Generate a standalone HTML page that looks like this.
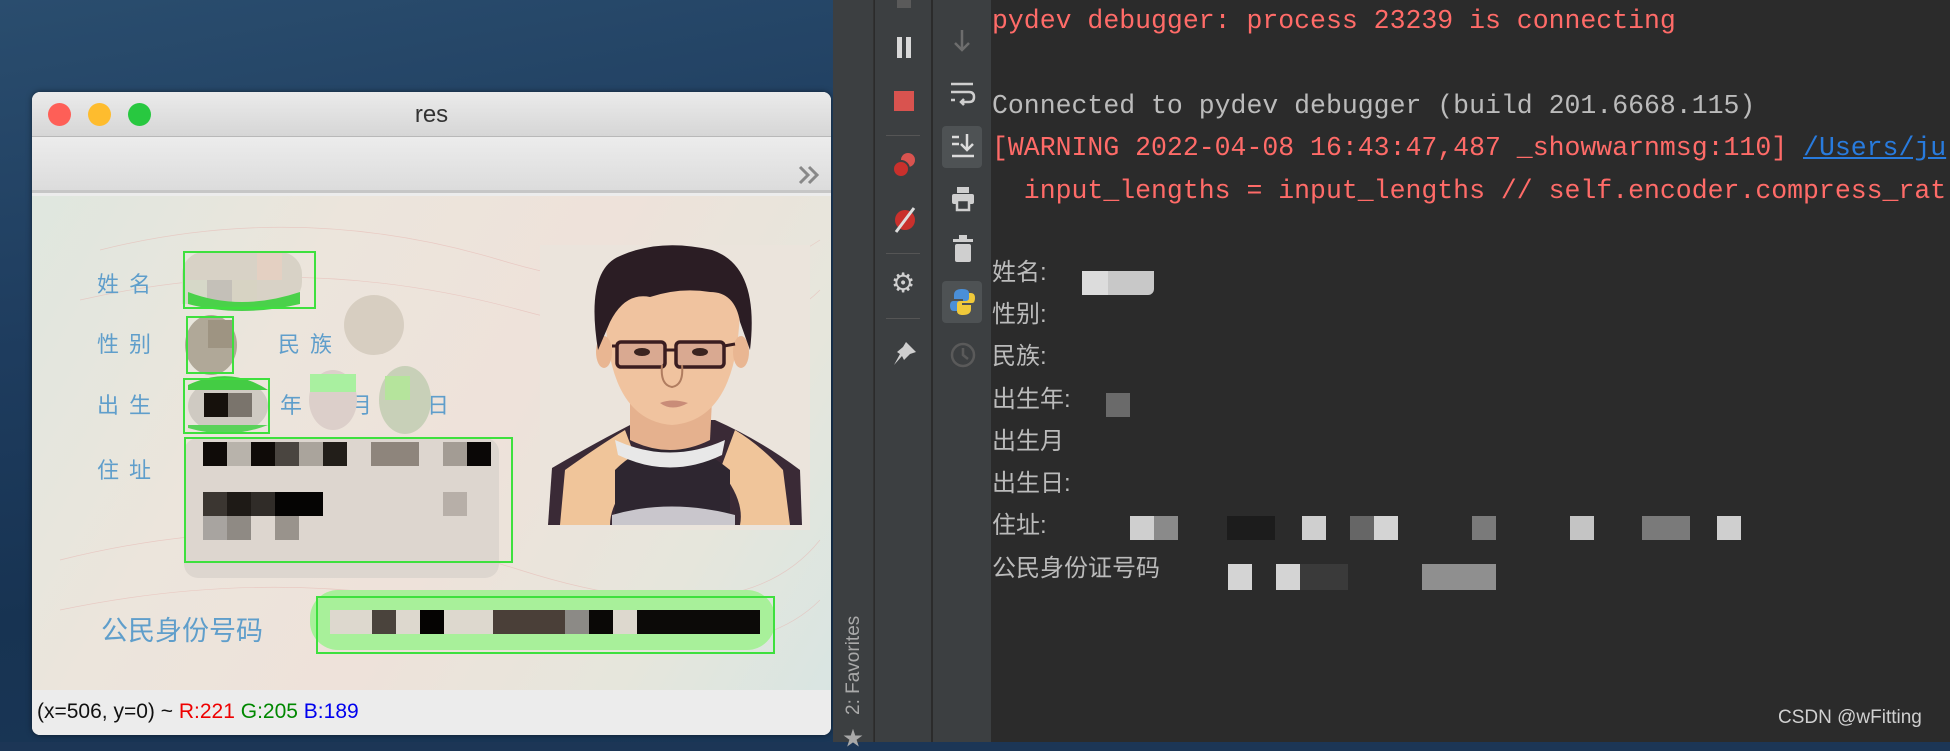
<!DOCTYPE html>
<html><head><meta charset="utf-8"><style>
*{margin:0;padding:0;box-sizing:border-box}
body{width:1950px;height:742px;overflow:hidden;position:relative;background:#1c3656;font-family:"Liberation Sans","Noto Sans CJK SC",sans-serif}
.abs{position:absolute}
.desk{left:0;top:0;width:833px;height:742px;background:linear-gradient(170deg,#2a4d6e 0%,#1e3c5e 40%,#173352 70%,#1a3757 100%)}
.win{left:32px;top:92px;width:799px;height:643px;background:#ececec;border-radius:8px;overflow:hidden;box-shadow:0 0 6px rgba(0,0,0,.5)}
.title{left:0;top:0;width:799px;height:45px;background:linear-gradient(#ebebeb,#d6d6d6);border-bottom:1px solid #b8b8b8}
.tl{width:23px;height:23px;border-radius:50%;top:11px}
.tool{left:0;top:45px;width:799px;height:56px;background:linear-gradient(#ececec,#dcdcdc);border-bottom:3px solid #c6c6c6}
.card{left:0;top:104px;width:799px;height:494px;background:linear-gradient(120deg,#dfe7df 0%,#ece5dc 30%,#eee2da 55%,#e6e6dc 80%,#d9e5e2 100%)}
.status{left:0;top:598px;width:799px;height:45px;background:#ececec;font-size:21px;padding:10px 0 0 5px;color:#111}
.ide{left:833px;top:0;width:1117px;height:742px;background:#2b2b2b}
.c1{left:833px;top:0;width:41px;height:742px;background:#3c3f41;border-right:1px solid #323232}
.c2{left:875px;top:0;width:57px;height:742px;background:#3c3f41;border-right:1px solid #2b2b2b}
.c3{left:933px;top:0;width:58px;height:742px;background:#3c3f41}
.sep{height:1px;background:#555;left:886px;width:34px}
.con{left:992px;font-family:"Liberation Mono",monospace;font-size:26.5px;white-space:pre;line-height:30px}
.r{color:#ff6b68}
.cn{left:992px;font-size:24px;color:#bbbbbb;line-height:30px;font-family:"Liberation Sans","Noto Sans CJK SC",sans-serif}
.px{height:24px}
</style></head><body>
<div class="abs desk"></div>
<div class="abs win">
 <div class="abs title">
  <div class="abs tl" style="left:16px;background:#fe5f57"></div>
  <div class="abs tl" style="left:56px;background:#febc2e"></div>
  <div class="abs tl" style="left:96px;background:#28c840"></div>
  <div class="abs" style="left:0;width:799px;top:9px;text-align:center;font-size:24px;color:#333">res</div>
 </div>
 <div class="abs tool"><svg class="abs" style="right:10px;top:28px" width="24" height="20"><path d="M3 2 L11 10 L3 18 M12 2 L20 10 L12 18" stroke="#888" stroke-width="3" fill="none"/></svg></div>
 <div class="abs card">
  <svg class="abs" style="left:0;top:0" width="799" height="494" viewBox="32 196 799 494">
   <g fill="none" stroke="#e6b8b3" stroke-width="0.7" opacity=".6">
    <path d="M100 250 Q300 200 500 260 T820 240"/><path d="M80 300 Q300 250 520 310 T820 290"/><path d="M60 560 Q300 500 520 570 T820 540"/><path d="M60 610 Q300 560 520 620 T820 600"/>
   </g>
   <rect x="540" y="245" width="270" height="285" fill="#ebe4dc"/>
   <path d="M548 525 L552 468 Q600 440 640 420 L715 420 Q760 440 800 470 L802 525 Z" fill="#3a2a36"/>
   <path d="M560 525 L565 470 Q600 445 625 430 L640 470 Q610 500 610 525 Z" fill="#f0c59a"/>
   <path d="M790 525 L783 470 Q760 445 735 430 L720 470 Q745 500 740 525 Z" fill="#f0c59a"/>
   <path d="M615 525 L615 470 Q640 445 670 445 Q700 445 730 470 L730 525 Z" fill="#2e2630"/>
   <path d="M612 515 Q670 498 735 515 L735 525 L612 525Z" fill="#c9c6cc"/>
   <path d="M615 440 Q670 465 725 440 L722 455 Q670 480 618 455Z" fill="#e8e8e8"/>
   <path d="M630 400 L630 440 Q670 460 710 440 L712 400Z" fill="#e5b18e"/>
   <path d="M605 300 Q605 420 672 425 Q740 420 740 300 Q735 270 672 268 Q610 270 605 300Z" fill="#f0c39f"/>
   <ellipse cx="604" cy="352" rx="8" ry="16" fill="#e9b692"/><ellipse cx="741" cy="352" rx="8" ry="16" fill="#e9b692"/>
   <path d="M598 350 Q585 270 620 256 Q660 238 712 250 Q760 266 750 350 L740 322 Q735 292 710 292 Q680 287 650 297 Q625 292 610 322Z" fill="#2b1d24"/>
   <rect x="617" y="342" width="48" height="25" rx="4" fill="#d9a991" stroke="#3a1d20" stroke-width="3.5"/>
   <rect x="676" y="342" width="48" height="25" rx="4" fill="#d9a991" stroke="#3a1d20" stroke-width="3.5"/>
   <path d="M665 350 L676 350 M612 346 L617 346 M724 346 L735 344" stroke="#3a1d20" stroke-width="3"/>
   <ellipse cx="642" cy="352" rx="8" ry="4" fill="#3b2420"/><ellipse cx="700" cy="352" rx="8" ry="4" fill="#3b2420"/>
   <path d="M662 365 Q660 385 672 387 Q684 385 682 365" fill="none" stroke="#b07d60" stroke-width="2"/>
   <path d="M660 403 Q672 398 688 403 Q672 412 660 403Z" fill="#c98c78"/>
   <g font-family="Liberation Sans, Noto Sans CJK SC, sans-serif" font-size="22" fill="#5f9ecb" letter-spacing="10">
    <text x="97" y="292">姓名</text><text x="97" y="352">性别</text><text x="278" y="352">民族</text>
    <text x="97" y="413">出生</text><text x="280" y="413">年</text><text x="350" y="413">月</text><text x="427" y="413">日</text>
    <text x="97" y="478">住址</text>
    <text x="101" y="640" font-size="27" letter-spacing="0">公民身份号码</text>
   </g>
   <g>
    <rect x="182" y="252" width="120" height="52" rx="22" fill="#d8d2c6"/>
    <rect x="182" y="280" width="25" height="24" fill="#d6d8c8"/><rect x="207" y="280" width="25" height="24" fill="#c4c0b8"/><rect x="232" y="280" width="25" height="24" fill="#d7d3c3"/><rect x="257" y="252" width="25" height="28" fill="#e4d0c2"/>
    <path d="M188 292 Q240 312 300 292 L300 304 Q240 318 188 304Z" fill="#4ad14a"/>
    <ellipse cx="211" cy="345" rx="26" ry="30" fill="#b0a898"/><rect x="208" y="320" width="24" height="28" fill="#9e9482"/>
    <ellipse cx="374" cy="325" rx="30" ry="30" fill="#d7cec1"/>
    <ellipse cx="228" cy="406" rx="40" ry="28" fill="#cfcac2"/>
    <path d="M188 385 Q230 365 268 390 L188 390Z" fill="#44cc44"/><path d="M188 428 Q230 440 268 425 L188 425Z" fill="#5ad25a"/>
    <rect x="204" y="393" width="24" height="24" fill="#16110c"/><rect x="228" y="393" width="24" height="24" fill="#7a746c"/>
    <ellipse cx="333" cy="400" rx="24" ry="30" fill="#dccfca"/><rect x="310" y="374" width="46" height="18" fill="#a9f0a0"/>
    <ellipse cx="405" cy="400" rx="26" ry="34" fill="#c8d0b8"/><rect x="385" y="376" width="25" height="24" fill="#b5e49c"/>
    <rect x="184" y="438" width="315" height="140" rx="14" fill="#ddd6cf"/>
    <rect x="203" y="442" width="24" height="24" fill="#0f0b08"/><rect x="227" y="442" width="24" height="24" fill="#b8b3ab"/><rect x="251" y="442" width="24" height="24" fill="#0f0b08"/><rect x="275" y="442" width="24" height="24" fill="#4a4540"/><rect x="299" y="442" width="24" height="24" fill="#aaa49c"/><rect x="323" y="442" width="24" height="24" fill="#221e19"/><rect x="371" y="442" width="48" height="24" fill="#8e857c"/><rect x="443" y="442" width="24" height="24" fill="#a39c94"/><rect x="467" y="442" width="24" height="24" fill="#0a0706"/>
    <rect x="203" y="492" width="24" height="24" fill="#3b3631"/><rect x="227" y="492" width="24" height="24" fill="#1e1a16"/><rect x="251" y="492" width="24" height="24" fill="#302c28"/><rect x="275" y="492" width="48" height="24" fill="#050403"/><rect x="443" y="492" width="24" height="24" fill="#b7afa8"/>
    <rect x="203" y="516" width="24" height="24" fill="#a8a4a0"/><rect x="227" y="516" width="24" height="24" fill="#8f8a84"/><rect x="275" y="516" width="24" height="24" fill="#99938c"/>
    <rect x="310" y="590" width="465" height="60" rx="28" fill="#a8f09a"/>
    <rect x="330" y="610" width="430" height="24" fill="#ddd8ce"/>
    <rect x="372" y="610" width="24" height="24" fill="#4a433c"/><rect x="420" y="610" width="24" height="24" fill="#050302"/><rect x="493" y="610" width="72" height="24" fill="#4a3f38"/><rect x="565" y="610" width="24" height="24" fill="#8c8a86"/><rect x="589" y="610" width="24" height="24" fill="#0a0806"/><rect x="637" y="610" width="123" height="24" fill="#0c0a08"/>
   </g>
   <g fill="none" stroke="#3ee03e" stroke-width="2">
    <rect x="184" y="252" width="131" height="56"/><rect x="187" y="317" width="46" height="56"/><rect x="184" y="379" width="85" height="54"/><rect x="185" y="438" width="327" height="124"/><rect x="317" y="597" width="457" height="56"/>
   </g>
  </svg>
 </div>
 <div class="abs status">(x=506, y=0) ~ <span style="color:#e00">R:221</span> <span style="color:#080">G:205</span> <span style="color:#00e">B:189</span></div>
</div>

<div class="abs ide"></div>
<div class="abs c1"></div><div class="abs c2"></div><div class="abs c3"></div>
<div class="abs" style="left:843px;top:715px;transform:rotate(-90deg);transform-origin:0 0;color:#a9a9a9;font-size:19px;white-space:nowrap">2: Favorites</div>
<div class="abs" style="left:843px;top:722px;color:#a9a9a9;font-size:20px">★</div>
<div class="abs" style="left:897px;top:0;width:14px;height:8px;background:#5a5a5a"></div>
<div class="abs" style="left:897px;top:37px;width:5px;height:21px;background:#d8d8d8"></div><div class="abs" style="left:906px;top:37px;width:5px;height:21px;background:#d8d8d8"></div>
<div class="abs" style="left:894px;top:91px;width:20px;height:20px;background:#d9534f"></div>
<div class="abs sep" style="top:135px"></div>
<svg class="abs" style="left:890px;top:150px" width="30" height="30"><circle cx="18" cy="10" r="7" fill="#d9534f"/><circle cx="11" cy="19" r="8" fill="#c9302c" stroke="#3c3f41" stroke-width="2"/></svg>
<svg class="abs" style="left:890px;top:205px" width="30" height="30"><circle cx="15" cy="15" r="10" fill="#c9302c"/><path d="M6 27 L24 3" stroke="#ddd" stroke-width="3"/></svg>
<div class="abs sep" style="top:253px"></div>
<div class="abs" style="left:891px;top:268px;color:#d0d0d0;font-size:27px">⚙</div>
<div class="abs sep" style="top:318px"></div>
<svg class="abs" style="left:890px;top:338px" width="30" height="30"><path d="M16 4 L26 14 L20 16 L14 22 L12 18 L4 27 L10 16 L7 14 L13 9Z" fill="#cfcfcf"/></svg>
<svg class="abs" style="left:950px;top:28px" width="24" height="28"><path d="M12 2 V22 M5 15 L12 22 L19 15" stroke="#6d6d6d" stroke-width="2.5" fill="none"/></svg>
<svg class="abs" style="left:949px;top:80px" width="28" height="28"><path d="M2 4H24 M2 12H20 Q25 12 25 17 Q25 22 20 22 H12 M15 19 L12 22 L15 25 M2 20H6" stroke="#cfcfcf" stroke-width="2.5" fill="none"/></svg>
<div class="abs" style="left:942px;top:126px;width:40px;height:42px;background:#4e5254;border-radius:4px"></div>
<svg class="abs" style="left:950px;top:132px" width="26" height="30"><path d="M2 5H9 M2 12H9 M17 2V18 M11 12 L17 18 L23 12 M2 24H24" stroke="#dcdcdc" stroke-width="2.5" fill="none"/></svg>
<svg class="abs" style="left:950px;top:185px" width="26" height="28"><rect x="7" y="2" width="12" height="6" fill="#cfcfcf"/><rect x="2" y="9" width="22" height="10" rx="2" fill="#cfcfcf"/><rect x="7" y="15" width="12" height="10" fill="#3c3f41" stroke="#cfcfcf" stroke-width="2.5"/></svg>
<svg class="abs" style="left:952px;top:235px" width="22" height="30"><rect x="1" y="4" width="20" height="3" fill="#cfcfcf"/><rect x="7" y="0" width="8" height="4" fill="#cfcfcf"/><rect x="3" y="9" width="16" height="18" rx="2" fill="#cfcfcf"/></svg>
<div class="abs" style="left:942px;top:281px;width:40px;height:42px;background:#4e5254;border-radius:4px"></div>
<svg class="abs" style="left:949px;top:287px" width="28" height="30"><path d="M13 2 Q5 2 5 8 V12 H14 V14 H4 Q1 14 1 19 Q1 24 5 24 H8 V19 Q8 16 12 16 H17 Q20 16 20 13 V6 Q20 2 13 2Z" fill="#4a8fd8"/><path d="M14 28 Q22 28 22 22 V18 H13 V16 H23 Q26 16 26 11 Q26 6 22 6 H20 V11 Q20 14 16 14 H11 Q8 14 8 17 V24 Q8 28 14 28Z" fill="#f0c93a"/></svg>
<svg class="abs" style="left:948px;top:340px" width="30" height="30"><circle cx="15" cy="15" r="11" stroke="#5a5a5a" stroke-width="2.5" fill="none"/><path d="M15 8V15L20 19" stroke="#5a5a5a" stroke-width="2.5" fill="none"/></svg>

<div class="abs con r" style="top:6px">pydev debugger: process 23239 is connecting</div>
<div class="abs con" style="top:91px;color:#bbbbbb">Connected to pydev debugger (build 201.6668.115)</div>
<div class="abs con r" style="top:133px">[WARNING 2022-04-08 16:43:47,487 _showwarnmsg:110] <span style="color:#287bde;text-decoration:underline">/Users/ju</span></div>
<div class="abs con r" style="top:176px">  input_lengths = input_lengths // self.encoder.compress_rat</div>
<div class="abs cn" style="top:258px">姓名:</div>
<div class="abs cn" style="top:300px">性别:</div>
<div class="abs cn" style="top:342px">民族:</div>
<div class="abs cn" style="top:385px">出生年:</div>
<div class="abs cn" style="top:427px">出生月</div>
<div class="abs cn" style="top:469px">出生日:</div>
<div class="abs cn" style="top:511px">住址:</div>
<div class="abs cn" style="top:554px">公民身份证号码</div>
<div class="abs px" style="left:1082px;top:271px;width:72px;background:#c8c8c8;border-radius:0 0 6px 0"></div>
<div class="abs px" style="left:1082px;top:271px;width:26px;background:#dcdcdc"></div>
<div class="abs px" style="left:1106px;top:393px;width:24px;background:#6a6a6a"></div>
<div class="abs" style="left:1130px;top:516px;width:24px;height:24px;background:#cfcfcf"></div>
<div class="abs" style="left:1154px;top:516px;width:24px;height:24px;background:#8a8a8a"></div>
<div class="abs" style="left:1227px;top:516px;width:48px;height:24px;background:#1c1c1c"></div>
<div class="abs" style="left:1302px;top:516px;width:24px;height:24px;background:#cfcfcf"></div>
<div class="abs" style="left:1350px;top:516px;width:24px;height:24px;background:#666"></div>
<div class="abs" style="left:1374px;top:516px;width:24px;height:24px;background:#d4d4d4"></div>
<div class="abs" style="left:1472px;top:516px;width:24px;height:24px;background:#7a7a7a"></div>
<div class="abs" style="left:1570px;top:516px;width:24px;height:24px;background:#c4c4c4"></div>
<div class="abs" style="left:1642px;top:516px;width:48px;height:24px;background:#7a7a7a"></div>
<div class="abs" style="left:1717px;top:516px;width:24px;height:24px;background:#cfcfcf"></div>
<div class="abs" style="left:1228px;top:564px;width:24px;height:26px;background:#d4d4d4"></div>
<div class="abs" style="left:1276px;top:564px;width:24px;height:26px;background:#d4d4d4"></div>
<div class="abs" style="left:1300px;top:564px;width:48px;height:26px;background:#3a3a3a"></div>
<div class="abs" style="left:1422px;top:564px;width:74px;height:26px;background:#8f8f8f"></div>
<div class="abs" style="left:1778px;top:707px;color:#d0d0d0;font-size:19px">CSDN @wFitting</div>
</body></html>
